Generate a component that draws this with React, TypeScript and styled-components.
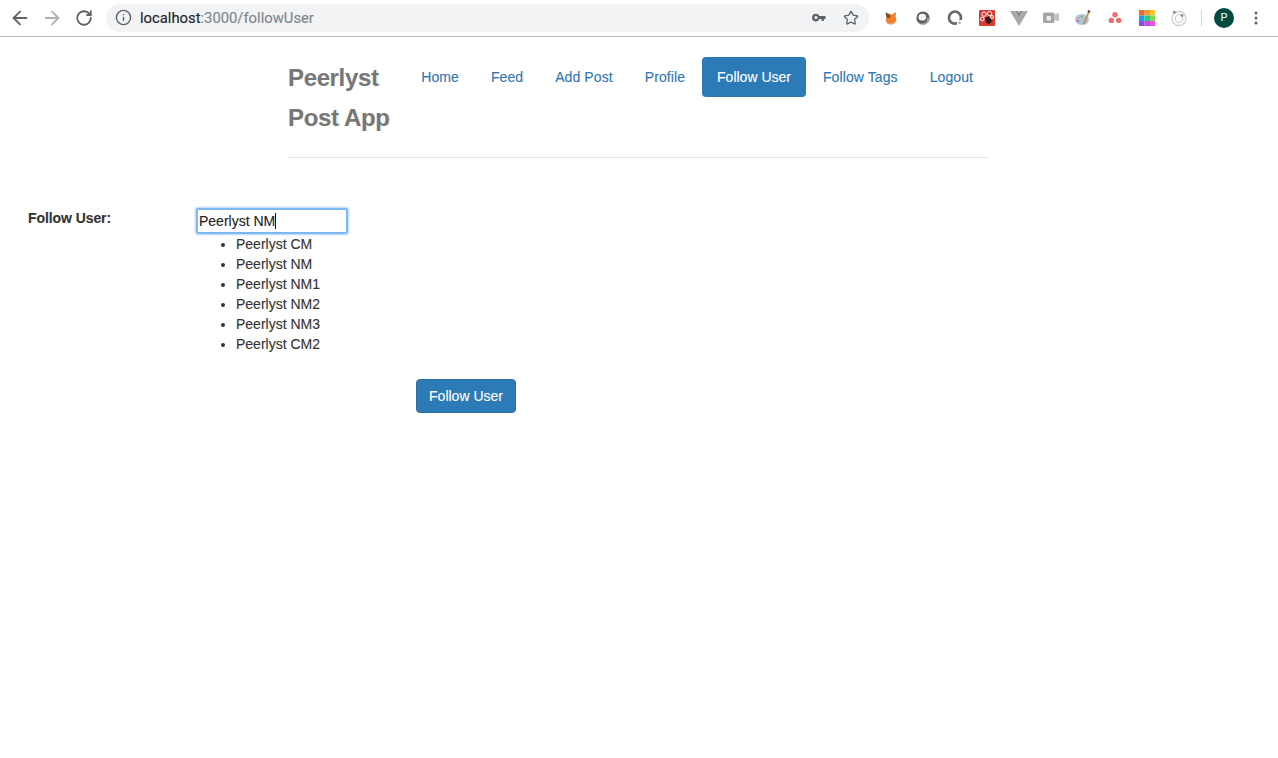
import React from "react";
import styled, { createGlobalStyle } from "styled-components";
import { ArrowLeft, ArrowRight, RotateCw, Info, Star } from "lucide-react";

const Global = createGlobalStyle`
  html, body { margin: 0; padding: 0; background: #fff; }
  body { font-family: "Liberation Sans", Arial, sans-serif; font-size: 14px; line-height: 20px; color: #333; -webkit-text-stroke: 0.12px currentColor; }
  * { box-sizing: border-box; }
`;

const Toolbar = styled.header`
  height: 37px;
  display: flex;
  align-items: center;
  padding: 0 0 1px 4px;
  border-bottom: 1px solid #b9babb;
  background: #fff;
`;
const ToolButton = styled.span<{ $color?: string }>`
  width: 32px;
  height: 32px;
  display: flex;
  align-items: center;
  justify-content: center;
  flex: none;
  color: ${(p) => p.$color || "#5f6368"};
`;
const ExtButton = styled(ToolButton)`
  svg {
    overflow: visible;
    filter: blur(0.35px);
  }
`;
const Omnibox = styled.div`
  width: 763px;
  height: 28px;
  margin-left: 6px;
  border-radius: 14px;
  background: #f1f3f4;
  display: flex;
  align-items: center;
  padding: 0 2px 0 1px;
  flex: none;
`;
const Url = styled.div`
  flex: 1;
  font-family: Roboto, "Liberation Sans", sans-serif;
  font-size: 14.8px;
  color: #80868b;
  margin-left: 1px;
  white-space: nowrap;
`;
const Host = styled.span`
  color: #202124;
`;
const Extensions = styled.div`
  display: flex;
  margin-left: 6px;
  flex: none;
`;
const Divider = styled.span`
  width: 1px;
  height: 16px;
  margin-left: 6px;
  background: #d0d2d4;
  flex: none;
`;
const Avatar = styled.span`
  width: 20px;
  height: 20px;
  margin-left: 12px;
  border-radius: 50%;
  background: #004a3f;
  color: #e8f0ee;
  font-family: Roboto, "Liberation Sans", sans-serif;
  font-size: 11px;
  display: flex;
  align-items: center;
  justify-content: center;
  flex: none;
`;
const Dots = styled.span`
  width: 32px;
  height: 32px;
  margin-left: 6px;
  display: flex;
  align-items: center;
  justify-content: center;
  flex: none;
`;

const Container = styled.div`
  width: 700px;
  margin: 0 0 0 288px;
  padding-top: 20px;
`;
const SiteHeader = styled.div`
  display: flex;
  justify-content: space-between;
  align-items: flex-start;
  padding-bottom: 19px;
  border-bottom: 1px solid #e5e5e5;
`;
const Brand = styled.h3`
  margin: 0;
  padding-top: 1px;
  flex: 1;
  min-width: 0;
  font-size: 24px;
  line-height: 40px;
  font-weight: 700;
  letter-spacing: -0.36px;
  color: #777;
`;
const Pills = styled.ul`
  display: flex;
  flex: none;
  gap: 2px;
  list-style: none;
  margin: 0;
  padding: 0;
`;
const Pill = styled.a<{ $active?: boolean }>`
  display: block;
  height: 40px;
  padding: 10px 15px;
  border-radius: 4px;
  letter-spacing: ${(p) => (p.$active ? "0" : "0.09px")};
  color: ${(p) => (p.$active ? "#fff" : "#2f77b4")};
  background: ${(p) => (p.$active ? "#2c7bb6" : "transparent")};
  text-decoration: none;
`;
const FormRow = styled.div`
  display: grid;
  grid-template-columns: 196px 1fr;
  margin-top: 50px;
`;
const FormLabel = styled.label`
  font-weight: 700;
  letter-spacing: -0.08px;
  padding: 0 0 0 28px;
`;
const Field = styled.div`
  display: flex;
  flex-direction: column;
`;
const TextInput = styled.div`
  width: 152px;
  height: 26px;
  border: 2px solid #7db8f1;
  border-radius: 2px;
  box-shadow: 0 0 2px 1px #b4d6f8;
  padding: 0 1px;
  font-size: 14px;
  line-height: 22px;
  color: #222;
  white-space: nowrap;
  display: flex;
  align-items: center;
`;
const Caret = styled.span`
  width: 1px;
  height: 16px;
  background: #111;
`;
const Suggestions = styled.ul`
  margin: 0;
  padding: 0 0 0 40px;
  font-size: 14px;
  line-height: 20px;
  color: #333;
`;
const SubmitRow = styled.div`
  padding: 25px 0 0 416px;
`;
const SubmitButton = styled.button`
  width: 100px;
  height: 34px;
  font: inherit;
  color: #fff;
  background: #2c7bb6;
  border: 1px solid #2a6ea5;
  border-radius: 4px;
  padding: 6px 12px;
  -webkit-text-stroke: 0.12px #fff;
`;

const Ext = ({ children }: { children: React.ReactNode }) => (
  <ExtButton>
    <svg width="16" height="16" viewBox="0 0 16 16">{children}</svg>
  </ExtButton>
);

const users = ["Peerlyst CM", "Peerlyst NM", "Peerlyst NM1", "Peerlyst NM2", "Peerlyst NM3", "Peerlyst CM2"];
const nav = ["Home", "Feed", "Add Post", "Profile", "Follow User", "Follow Tags", "Logout"];

export default function App() {
  return (
    <>
      <Global />
      <Toolbar>
        <ToolButton><ArrowLeft size={22} strokeWidth={2} /></ToolButton>
        <ToolButton $color="#b0b3b6"><ArrowRight size={22} strokeWidth={2} /></ToolButton>
        <ToolButton><RotateCw size={18} strokeWidth={2.4} /></ToolButton>
        <Omnibox>
          <ToolButton><Info size={17} strokeWidth={2} /></ToolButton>
          <Url><Host>localhost</Host>:3000/followUser</Url>
          <ToolButton>
            <svg width="17" height="17" viewBox="0 0 16 16" fill="#5f6368">
              <path d="M4.700 4.400a3.600 3.600 0 1 0 3.200 5h2.100v1.800h2.100V9.400h1.600V6.500H7.900a3.600 3.600 0 0 0-3.200-2.100zm0 2.100a1.500 1.500 0 1 1 0 3 1.500 1.500 0 0 1 0-3z" />
            </svg>
          </ToolButton>
          <ToolButton><Star size={16} strokeWidth={1.9} /></ToolButton>
        </Omnibox>
        <Extensions>
          <Ext>
            <path d="M2.500 2.500l4.500 2h2l4-2.500-.4 5 .9 3-2 3.500-2.400.3H7.400L4.800 14 2.700 10.500l.9-3z" fill="#f0812a" />
            <path d="M2.500 2.500l4.800 2v3.500H3.600z" fill="#7d5330" />
            <path d="M6 13h4v1.500H6z" fill="#c9a98a" />
          </Ext>
          <Ext>
            <circle cx="8" cy="8" r="6.600" fill="#5f5f5f" />
            <path d="M8 14.600A6.600 6.600 0 0 0 14.600 8H12A4.400 4.400 0 0 1 3.400 10 6.600 6.600 0 0 0 8 14.600z" fill="#a3a3a3" />
            <ellipse cx="7.300" cy="7.200" rx="3.800" ry="3.400" fill="#f5f5f5" />
          </Ext>
          <Ext>
            <circle cx="8" cy="7.700" r="6" fill="none" stroke="#6b6b6b" strokeWidth="2.700" />
            <path d="M10 10h6v6h-6z" fill="#fff" />
            <circle cx="12.600" cy="12.800" r="1.400" fill="#b0b0b0" />
          </Ext>
          <Ext>
            <rect x="0" y="0" width="16" height="16" rx="1" fill="#d93a32" />
            <circle cx="5" cy="4.200" r="2.200" fill="none" stroke="#fff" strokeWidth="1" />
            <circle cx="10.500" cy="3.500" r="2.200" fill="none" stroke="#fff" strokeWidth="1" />
            <circle cx="3.300" cy="9" r="1.800" fill="none" stroke="#fff" strokeWidth="1" />
            <circle cx="13" cy="7" r="1.500" fill="none" stroke="#fff" strokeWidth="1" />
            <path d="M6 8l4-1.500 3 4.500-2.500 3-3-1z" fill="#2a1c1c" />
          </Ext>
          <Ext>
            <path d="M-1 1h5.500L8 8l3.500-7H17L8 16z" fill="#a8a8a8" />
            <path d="M4.500 1h2.700L8 3l.8-2h2.700L8 8z" fill="#8a8a8a" />
          </Ext>
          <Ext>
            <rect x="0" y="2.500" width="11.500" height="10.500" rx="1.500" fill="#a6a6a6" />
            <path d="M11.500 4.500l4.500-1.500v8.500l-4.500-1.500z" fill="#c2c2c2" />
            <rect x="3.500" y="6" width="4.500" height="4.500" rx="1" fill="#eeeeee" />
          </Ext>
          <Ext>
            <ellipse cx="7" cy="9.500" rx="7" ry="5.500" fill="#a9c6e0" />
            <circle cx="3.500" cy="8" r="1.100" fill="#e2a04c" />
            <circle cx="3" cy="11" r="1.100" fill="#e2574c" />
            <circle cx="6.500" cy="6.500" r="1.100" fill="#6fb85c" />
            <path d="M14.500 0.500L8.500 14" stroke="#c98f3f" strokeWidth="1.800" />
            <path d="M13 0l2.500 1-1 2-2-1z" fill="#5a4a3a" />
          </Ext>
          <Ext>
            <circle cx="8" cy="4.700" r="2.700" fill="#f4696d" />
            <circle cx="4.300" cy="10.400" r="2.700" fill="#f4696d" />
            <circle cx="11.700" cy="10.400" r="2.700" fill="#f4696d" />
          </Ext>
          <Ext>
            <path d="M0 0h5.500v5.500H0z" fill="#f4662d" />
            <path d="M5.500 0H11v5.500H5.500z" fill="#f79b2d" />
            <path d="M11 0h5v5.500h-5z" fill="#fcc832" />
            <path d="M0 5.500h5.500V11H0z" fill="#1a9fe0" />
            <path d="M5.500 5.500H11V11H5.500z" fill="#2ec58a" />
            <path d="M11 5.500h5V11h-5z" fill="#7ed957" />
            <path d="M0 11h5.500v5H0z" fill="#8a4fe0" />
            <path d="M5.500 11H11v5H5.500z" fill="#c04fe0" />
            <path d="M11 11h5v5h-5z" fill="#f04fe0" />
          </Ext>
          <Ext>
            <circle cx="8" cy="8.500" r="7" fill="none" stroke="#cfcfcf" strokeWidth="1.300" />
            <circle cx="8" cy="8.500" r="3.800" fill="none" stroke="#d6d6d6" strokeWidth="1.300" />
            <rect x="1.800" y="1" width="3" height="2.500" rx="1" fill="#8d8d8d" />
            <circle cx="11" cy="5.500" r="1.400" fill="#8d8d8d" />
          </Ext>
        </Extensions>
        <Divider />
        <Avatar>P</Avatar>
        <Dots>
          <svg width="4" height="14" viewBox="0 0 4 14" fill="#5f6368">
            <circle cx="2" cy="2" r="1.500" />
            <circle cx="2" cy="7" r="1.500" />
            <circle cx="2" cy="12" r="1.500" />
          </svg>
        </Dots>
      </Toolbar>
      <Container>
        <SiteHeader>
          <Brand>Peerlyst Post App</Brand>
          <Pills>
            {nav.map((n) => (
              <li key={n}>
                <Pill href="#" $active={n === "Follow User"}>{n}</Pill>
              </li>
            ))}
          </Pills>
        </SiteHeader>
      </Container>
      <FormRow>
        <FormLabel>Follow User:</FormLabel>
        <Field>
          <TextInput>Peerlyst NM<Caret /></TextInput>
          <Suggestions>
            {users.map((u) => <li key={u}>{u}</li>)}
          </Suggestions>
        </Field>
      </FormRow>
      <SubmitRow>
        <SubmitButton>Follow User</SubmitButton>
      </SubmitRow>
    </>
  );
}
